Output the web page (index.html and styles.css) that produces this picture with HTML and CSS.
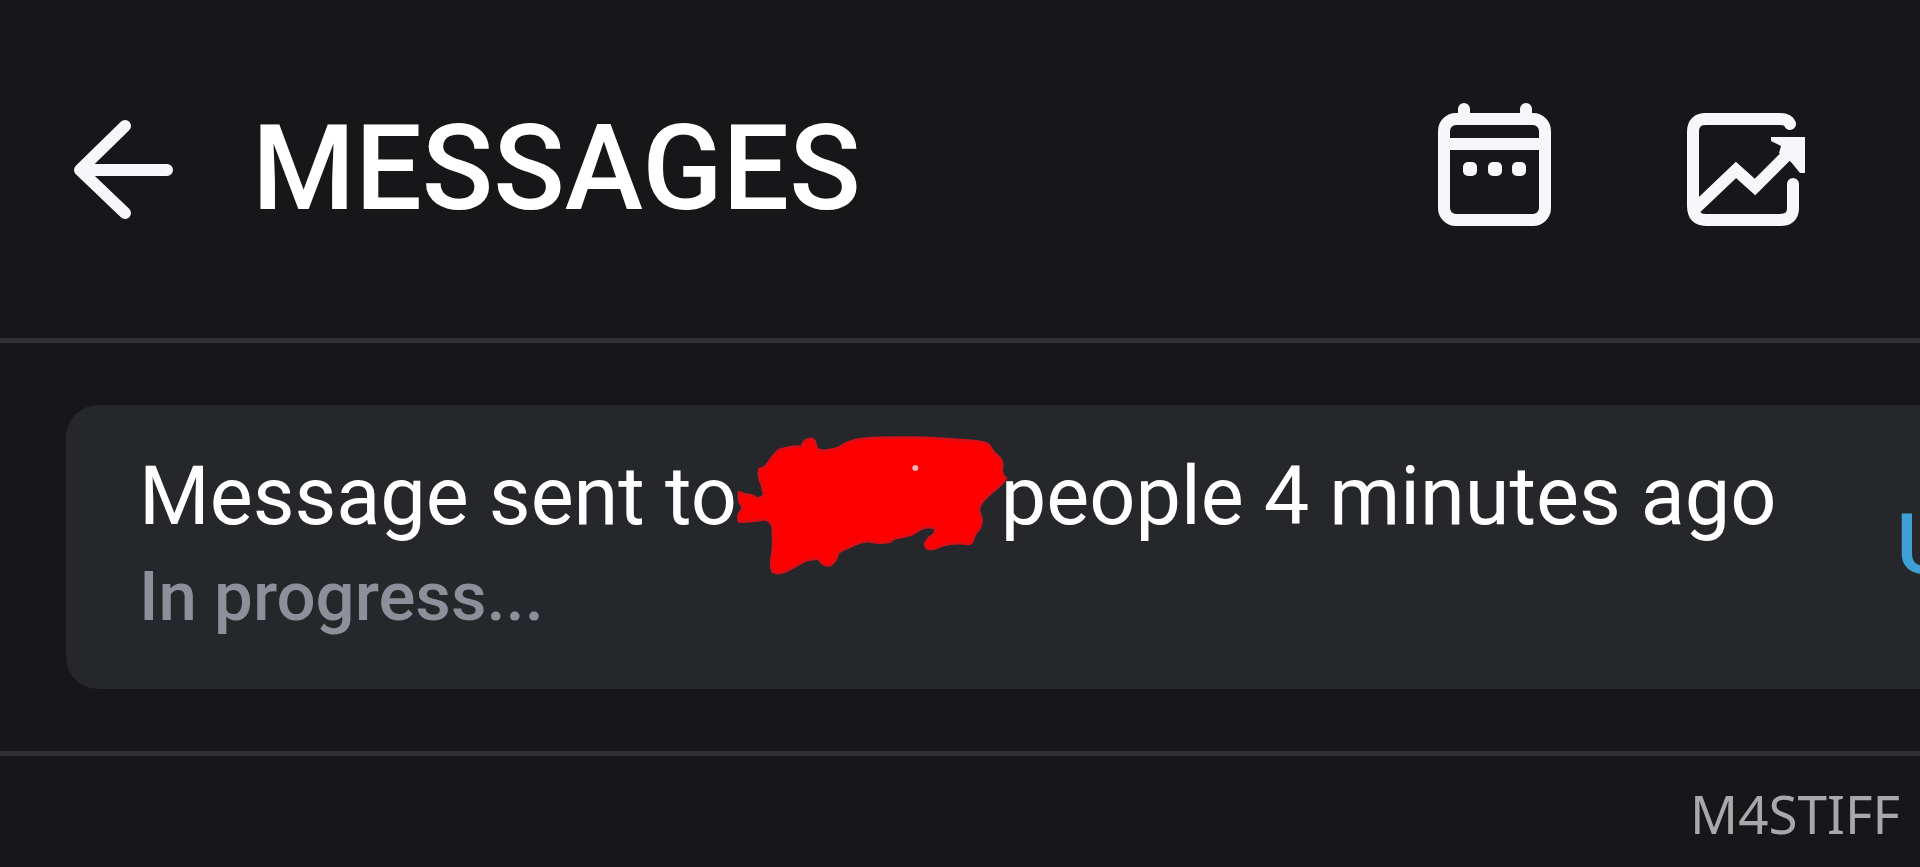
FILE: index.html
```html
<!DOCTYPE html>
<html lang="en">
<head>
    <meta charset="UTF-8">
    <meta name="viewport" content="width=device-width, initial-scale=1.0">
    <title>Messages</title>
    <link rel="stylesheet" href="styles.css">
</head>
<body>
    <header class="header">
        <button class="icon-btn" aria-label="Back">
            <svg class="icon-back" viewBox="0 0 100 100">
                <path d="M51 7L6 51l45 43M10 51h83"/>
            </svg>
        </button>
        <h1 class="title">MESSAGES</h1>
        <div class="actions">
            <button class="icon-btn" aria-label="Calendar">
                <svg class="icon-action" viewBox="0 0 120 140">
                    <rect x="6" y="20" width="101" height="101" rx="12"/>
                    <path d="M10 45h94M26 10v10M88 10v10"/>
                    <g class="fill">
                        <rect x="25" y="63" width="14" height="14" rx="5"/>
                        <rect x="50" y="63" width="14" height="14" rx="5"/>
                        <rect x="74" y="63" width="14" height="14" rx="5"/>
                    </g>
                </svg>
            </button>
            <button class="icon-btn" aria-label="Statistics">
                <svg class="icon-action" viewBox="0 0 120 140">
                    <path d="M104 25q-2-5-10-5H20Q7 20 7 33v74q0 14 13 14h74q13 0 13-12V85"/>
                    <path class="trend" d="M10 109L50 71l19 17 34-34"/>
                    <path class="fill" d="M85 38h34v36h-5l-9-11-12-9 2-7-10-5z"/>
                </svg>
            </button>
        </div>
    </header>

    <main class="content">
        <div class="card">
            <div class="card-text">
                <p class="message">
                    <span>Message sent to</span>
                    <span class="redacted">
                        <svg class="scribble" viewBox="93 102 822 426">
                            <path d="M110 280Q130 288 142 288T165 300L186 290Q182 262 175 245T172 210Q190 208 200 190T232 152Q265 142 300 142Q305 122 322 120T340 135Q342 156 362 155T410 146Q440 124 480 120T600 116 700 118 790 124 862 140Q872 160 888 172T900 205 912 238Q900 255 886 266T848 300 834 345 832 390Q818 402 814 418T800 435Q770 430 745 434T705 446 675 448Q665 440 672 428T690 410 700 388Q670 378 650 394T600 414 565 428Q530 434 510 428T450 440 408 462Q402 490 385 498T350 480Q320 478 300 490T255 515 212 518Q204 495 210 470T212 385Q205 358 180 362T112 368Q104 350 116 338T112 308z"/>
                            <circle class="spot" cx="640" cy="207" r="9"/>
                        </svg>
                    </span>
                    <span>people 4 minutes ago</span>
                </p>
                <p class="status">In progress...</p>
            </div>
            <button class="card-action">U</button>
        </div>
    </main>

    <footer class="footer">M4STIFF</footer>
</body>
</html>
```
FILE: styles.css
```css
* {
    margin: 0;
    padding: 0;
    box-sizing: border-box;
}

body {
    font-family: Roboto, 'Liberation Sans', sans-serif;
    background: #171719;
    color: #fff;
    min-height: 100vh;
    overflow: hidden;
}

button {
    background: none;
    border: none;
    font-family: inherit;
    cursor: pointer;
}

.header {
    display: flex;
    align-items: center;
    padding: 97px 114px 97px 74px;
    border-bottom: 5px solid #303033;
}

.icon-btn {
    display: flex;
}

.icon-btn svg {
    fill: none;
    stroke: #f7f7fa;
    stroke-width: 12;
    stroke-linecap: round;
    stroke-linejoin: round;
}

.icon-btn .trend {
    stroke-linejoin: miter;
    stroke-linecap: butt;
}

.icon-btn .fill {
    fill: #f7f7fa;
    stroke: none;
}

.icon-back {
    width: 100px;
    height: 100px;
}

.icon-action {
    width: 120px;
    height: 140px;
}

.title {
    margin-left: 78px;
    font-size: 118px;
    line-height: 144px;
    font-weight: 500;
}

.actions {
    display: flex;
    gap: 128px;
    margin-left: auto;
}

.content {
    padding: 62px 0 62px 66px;
    border-bottom: 5px solid #303033;
}

.card {
    display: flex;
    align-items: center;
    gap: 120px;
    padding: 42px 0 42px 73px;
    background: #26272a;
    border-radius: 32px 0 0 32px;
}

.card-text {
    flex: none;
    white-space: nowrap;
}

.message {
    display: flex;
    font-size: 81px;
    line-height: 100px;
}

.redacted {
    position: relative;
    width: 264px;
}

.scribble {
    position: absolute;
    top: -14px;
    left: -4px;
    width: 274px;
    height: 142px;
    fill: #f00;
    stroke: #d80f16;
    stroke-width: 8;
    stroke-linejoin: round;
}

.scribble .spot {
    fill: #ffb0b0;
    stroke: none;
}

.status {
    color: #8b909a;
    font-size: 69px;
    line-height: 100px;
    font-weight: 500;
}

.card-action {
    padding-bottom: 4px;
    color: #3fa0d8;
    font-size: 84px;
    line-height: 100px;
    font-weight: 500;
}

.footer {
    padding: 22px 20px 18px;
    color: #a8a8aa;
    font-family: 'Noto Sans', sans-serif;
    font-size: 53px;
    line-height: 71px;
    text-align: right;
}
```
